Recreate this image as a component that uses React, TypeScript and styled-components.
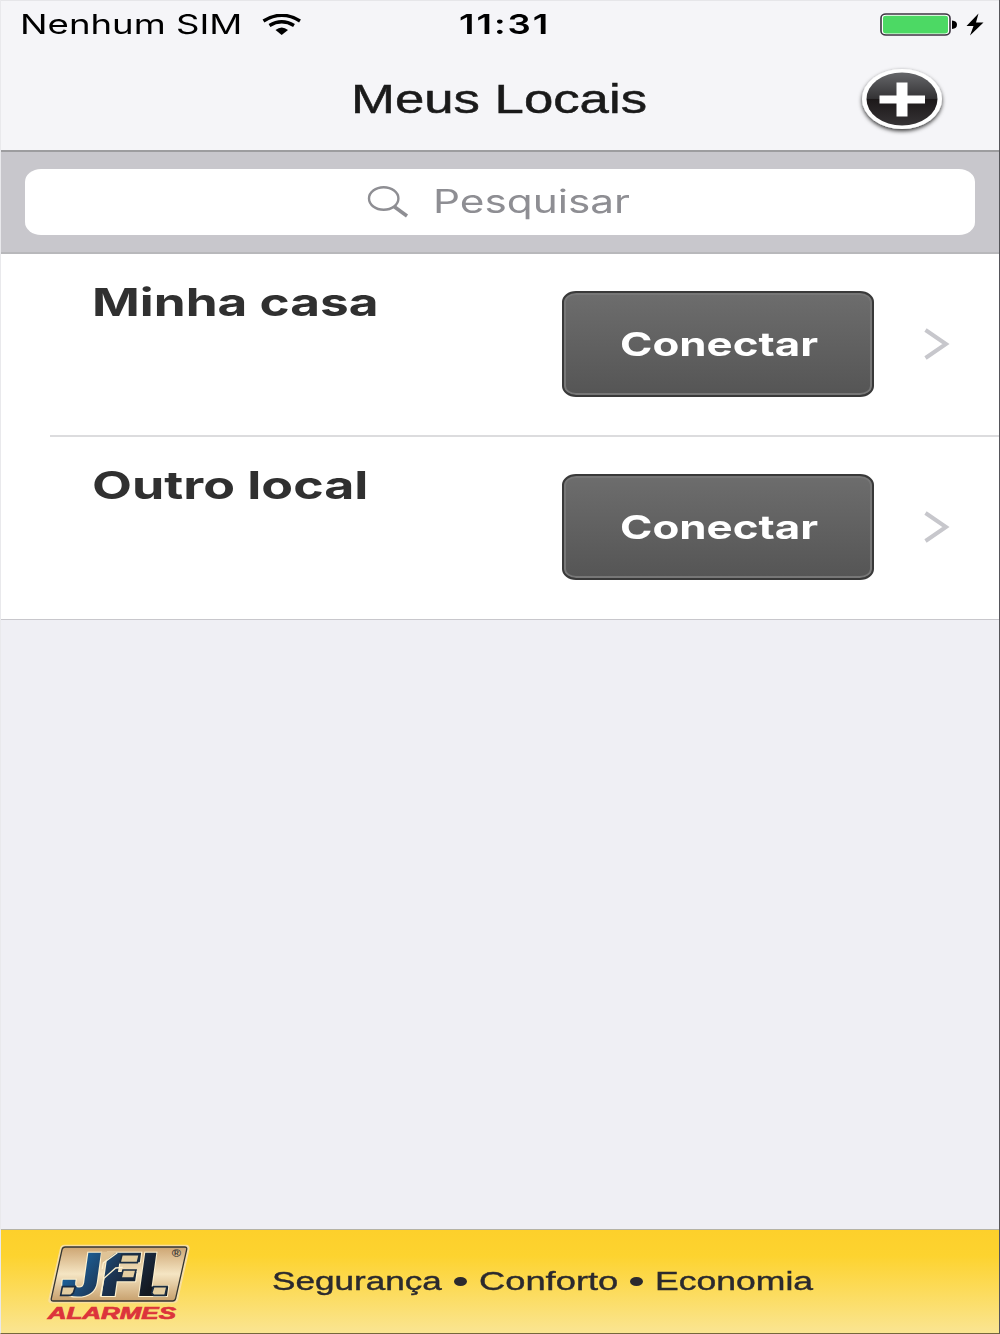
import React from "react";
import styled, { createGlobalStyle } from "styled-components";

const GlobalStyle = createGlobalStyle`
  * { box-sizing: border-box; }
  body { margin: 0; background: #f5f5f8; }
`;

const ui = `Inter, "Noto Sans", sans-serif`;
const helvetica = `"Liberation Sans", Arial, sans-serif`;

const Screen = styled.main`
  width: 1000px;
  height: 1334px;
  display: flex;
  flex-direction: column;
  overflow: hidden;
  background: #efeff4;
  border-right: 1px solid #55555a;
  border-left: 1px solid #e9e9ec;
  border-bottom: 1px solid #75683c;
`;

/* Wide type: glyphs are extended horizontally and keep the given box width. */
const WideText = styled.span<{
  $size: number;
  $width: number;
  $scale: number;
  $weight?: number;
  $family?: string;
  $color?: string;
  $stroke?: number;
  $spacing?: number;
}>`
  display: block;
  flex: none;
  width: ${(p) => p.$width}px;
  white-space: nowrap;
  font-family: ${(p) => p.$family ?? ui};
  font-size: ${(p) => p.$size}px;
  font-weight: ${(p) => p.$weight ?? 400};
  letter-spacing: ${(p) => p.$spacing ?? 0}px;
  line-height: 1.2;
  color: ${(p) => p.$color ?? "#000"};
  -webkit-text-stroke: ${(p) => p.$stroke ?? 0}px currentColor;
  transform: scaleX(${(p) => p.$scale});
  transform-origin: left center;
`;

const StatusBar = styled.header`
  height: 48px;
  flex: none;
  display: grid;
  grid-template-columns: 458px 1fr auto;
  align-items: center;
  padding: 0 14px 0 0;
  background: #f5f5f8;
  border-top: 1px solid #e6e6e9;
`;

const Carrier = styled.div`
  display: flex;
  align-items: center;
  gap: 20px;
  padding-left: 19px;
`;

const Power = styled.div`
  display: flex;
  align-items: center;
  gap: 6px;
`;

const NavBar = styled.nav`
  height: 104px;
  flex: none;
  display: grid;
  grid-template-columns: 350px 1fr 142px;
  align-items: center;
  background: #f5f5f8;
  border-bottom: 2px solid #9d9d9f;
`;

const AddButton = styled.button`
  width: 92px;
  height: 72px;
  margin: 4px 0 0 -1px;
  padding: 0;
  border: 0;
  background: none;
  svg { display: block; }
`;

const SearchBar = styled.div`
  height: 102px;
  flex: none;
  padding: 17px 24px 18px;
  background: #c8c7cc;
  border-bottom: 2px solid #b8b8bb;
`;

const SearchField = styled.div`
  height: 66px;
  display: flex;
  align-items: center;
  padding-left: 342px;
  gap: 24px;
  background: #fff;
  border-radius: 16px / 13px;
`;

const List = styled.ul`
  margin: 0;
  padding: 0;
  list-style: none;
  flex: none;
  background: #fff;
  border-bottom: 1px solid #c8c7cc;
`;

const Row = styled.li`
  height: 181px;
  display: grid;
  grid-template-columns: 470px 312px 1fr;
  align-items: center;
  padding-left: 91px;

  & + & {
    height: 184px;
    border-top: 2px solid #dcdcde;
    border-image: linear-gradient(to right, transparent 51px, #dcdcde 51px) 2;
  }
`;

const RowName = styled.div`
  align-self: start;
  padding-top: 24.5px;
`;

const ConnectButton = styled.button`
  width: 312px;
  height: 106px;
  margin-top: -2px;
  padding: 2px 0 0 56px;
  display: flex;
  align-items: center;
  text-align: left;
  border: 2px solid #393939;
  border-radius: 14px / 11px;
  background: linear-gradient(#6d6d6d, #555);
  box-shadow: inset 0 0 0 2px #777;
`;

const Chevron = styled.svg`
  display: block;
  margin: -2px 0 0 49px;
`;

const Footer = styled.footer`
  margin-top: auto;
  height: 104px;
  flex: none;
  display: flex;
  align-items: center;
  padding-left: 45px;
  gap: 80px;
  border-top: 1px solid #b5b3a5;
  background: linear-gradient(#fdd02b, #fdd32f 25%, #fcdc5f 62%, #fae592);
`;

const Motto = styled.div`
  display: flex;
  align-items: center;
`;

const Dot = styled.i`
  width: 13px;
  height: 9px;
  margin-right: 12px;
  border-radius: 50%;
  background: #2b2a2e;
`;

function WifiIcon() {
  return (
    <svg width="40" height="22" viewBox="0 0 40 22">
      <path d="M1.500 7 Q20 -4.500 38 7" fill="none" stroke="#000" strokeWidth="3.400" />
      <path d="M7.500 11.500 Q19.700 4 32 11.500" fill="none" stroke="#000" strokeWidth="3.400" />
      <path d="M13.500 16 Q19.700 11 26 16 L19.700 21 Z" fill="#000" />
    </svg>
  );
}

function BatteryIcon() {
  return (
    <svg width="79" height="24" viewBox="0 0 79 24">
      <rect x="1" y="1" width="69" height="21" rx="5" ry="4" fill="#fff" stroke="#3c3440" strokeWidth="1.600" />
      <rect x="3" y="2.800" width="65" height="17.600" rx="3" ry="2.400" fill="#4cd964" />
      <path d="M72 7.500 Q77 8 77 11.700 Q77 15.500 72 16 Z" fill="#000" />
    </svg>
  );
}

function BoltIcon() {
  return (
    <svg width="20" height="24" viewBox="0 0 20 24">
      <path d="M13.500 0.500 L1.500 13 L8.500 13 L5 22.500 L18.500 9.500 L11 9.500 Z" fill="#000" />
    </svg>
  );
}

function PlusIcon() {
  return (
    <svg width="92" height="72" viewBox="0 0 92 72">
      <defs>
        <linearGradient id="disc" x1="0" y1="0" x2="0" y2="1">
          <stop offset="0" stopColor="#66676a" />
          <stop offset=".49" stopColor="#343335" />
          <stop offset=".5" stopColor="#1c1819" />
          <stop offset="1" stopColor="#363335" />
        </linearGradient>
        <filter id="shade" x="-20%" y="-20%" width="140%" height="150%">
          <feDropShadow dx="0" dy="2" stdDeviation="2" floodColor="#000" floodOpacity=".8" />
        </filter>
      </defs>
      <ellipse cx="46" cy="34" rx="40" ry="30" fill="#fff" filter="url(#shade)" />
      <ellipse cx="46" cy="34" rx="35.500" ry="26.500" fill="url(#disc)" />
      <path d="M40.500 17.500 H51.500 V30.500 H69 V38.500 H51.500 V51.500 H40.500 V38.500 H23.500 V30.500 H40.500 Z" fill="#fff" />
    </svg>
  );
}

function SearchIcon() {
  return (
    <svg width="42" height="34" viewBox="0 0 42 34">
      <ellipse cx="16.700" cy="13.500" rx="14.700" ry="11.300" fill="none" stroke="#8e8e93" strokeWidth="2.400" />
      <path d="M27 21.500 L40 31" stroke="#8e8e93" strokeWidth="3.600" />
    </svg>
  );
}

const LogoMark = styled.svg`
  display: block;
  flex: none;
  overflow: visible;
`;

function Logo() {
  return (
    <LogoMark width="146" height="80" viewBox="48 69 438 240">
      <defs>
        <linearGradient id="plate" x1="0" y1="0" x2="0" y2="1">
          <stop offset="0" stopColor="#cda572" />
          <stop offset=".5" stopColor="#f5e5c3" />
          <stop offset="1" stopColor="#c7a06d" />
        </linearGradient>
        <linearGradient id="ink" gradientUnits="userSpaceOnUse" x1="110" y1="110" x2="330" y2="250">
          <stop offset="0" stopColor="#1d69a6" />
          <stop offset=".55" stopColor="#1c3452" />
          <stop offset="1" stopColor="#141820" />
        </linearGradient>
      </defs>
      <path d="M104 80 H468 Q478 80 476 90 L442 242 Q440 250 432 250 H65 Q55 250 58 240 L92 90 Q94 80 104 80 Z" fill="#f6e6ba" stroke="#f8dfa0" strokeWidth="5" />
      <path d="M106 84 H464 Q472 84 470 92 L437 238 Q435 246 428 246 H70 Q62 246 64 238 L96 92 Q98 84 106 84 Z" fill="url(#plate)" stroke="#353532" strokeWidth="4" />
      <g transform="translate(32 0) skewX(-8)" fontFamily="Inter, sans-serif" fontWeight="900" fontSize="178" fill="url(#ink)" stroke="#fff2cf" strokeWidth="6" paintOrder="stroke">
        <text x="88" y="231" textLength="116" lengthAdjust="spacingAndGlyphs">J</text>
        <text x="207" y="231" textLength="114" lengthAdjust="spacingAndGlyphs">F</text>
        <text x="320" y="231" textLength="96" lengthAdjust="spacingAndGlyphs">L</text>
      </g>
      {/* Bevelled shoulder and the light inline running down the middle letter */}
      <path d="M214 98 H262 L214 134 Z" fill="#dfc396" />
      <path d="M262 101 L220 132 L217 150" fill="none" stroke="#fff2cf" strokeWidth="4" />
      <path d="M278 145 L257 147 L222 178 L211 232" fill="none" stroke="#fff2cf" strokeWidth="4" />
      {/* Hollow tips of the three letters */}
      <g fill="#e3cda1" stroke="#1b2d42" strokeWidth="5">
        <path d="M97 203 H136 L130 222 L122 229 H92 Z" />
        <path d="M276 107 H328 L322 131 H270 Z" />
        <path d="M279 153 H318 L312 177 H273 Z" />
        <path d="M371 203 H411 L405 229 H371 L365 222 Z" />
      </g>
      <text x="425" y="115" fontFamily="Liberation Sans, Arial, sans-serif" fontSize="34" fontWeight="700" textLength="28" lengthAdjust="spacingAndGlyphs" fill="#3d3d38">®</text>
      <text x="53" y="301" fontFamily="Liberation Sans, Arial, sans-serif" fontSize="48" fontWeight="700" fontStyle="italic" textLength="385" lengthAdjust="spacingAndGlyphs" fill="#dc343b" stroke="#dc343b" strokeWidth="2">ALARMES</text>
    </LogoMark>
  );
}

const places = [
  { name: "Minha casa", scale: 1.333 },
  { name: "Outro local", scale: 1.348 },
];

const motto = [
  { word: "Segurança", width: 182, scale: 1.325 },
  { word: "Conforto", width: 151, scale: 1.37 },
  { word: "Economia", width: 158, scale: 1.342 },
];

export default function App() {
  return (
    <>
      <GlobalStyle />
      <Screen>
        <StatusBar>
          <Carrier>
            <WideText $size={27.5} $width={222} $scale={1.33}>Nenhum SIM</WideText>
            <WifiIcon />
          </Carrier>
          <WideText $size={27.5} $width={92} $scale={1.33} $weight={600} $spacing={1.5}>11:31</WideText>
          <Power>
            <BatteryIcon />
            <BoltIcon />
          </Power>
        </StatusBar>
        <NavBar>
          <span />
          <WideText $size={40.5} $width={298} $scale={1.302} $family={helvetica} $color="#1a1a1a" $stroke={0.5}>Meus Locais</WideText>
          <AddButton aria-label="Adicionar"><PlusIcon /></AddButton>
        </NavBar>
        <SearchBar>
          <SearchField>
            <SearchIcon />
            <WideText $size={32} $width={200} $scale={1.322} $color="#8e8e93">Pesquisar</WideText>
          </SearchField>
        </SearchBar>
        <List>
          {places.map((place) => (
            <Row key={place.name}>
              <RowName>
                <WideText $size={38.5} $width={290} $scale={place.scale} $weight={700} $color="#303030">{place.name}</WideText>
              </RowName>
              <ConnectButton>
                <WideText $size={33} $width={200} $scale={1.328} $weight={700} $color="#fff">Conectar</WideText>
              </ConnectButton>
              <Chevron width="28" height="32" viewBox="0 0 28 32">
                <path d="M2.500 2 L23 16 L2.500 30" fill="none" stroke="#c7c7cc" strokeWidth="4" />
              </Chevron>
            </Row>
          ))}
        </List>
        <Footer>
          <Logo />
          <Motto>
            {motto.map((part, i) => (
              <React.Fragment key={part.word}>
                {i > 0 && <Dot />}
                <WideText $size={26.5} $width={part.width} $scale={part.scale} $family={helvetica} $color="#2b2a2e" $stroke={0.4}>{part.word}</WideText>
              </React.Fragment>
            ))}
          </Motto>
        </Footer>
      </Screen>
    </>
  );
}
